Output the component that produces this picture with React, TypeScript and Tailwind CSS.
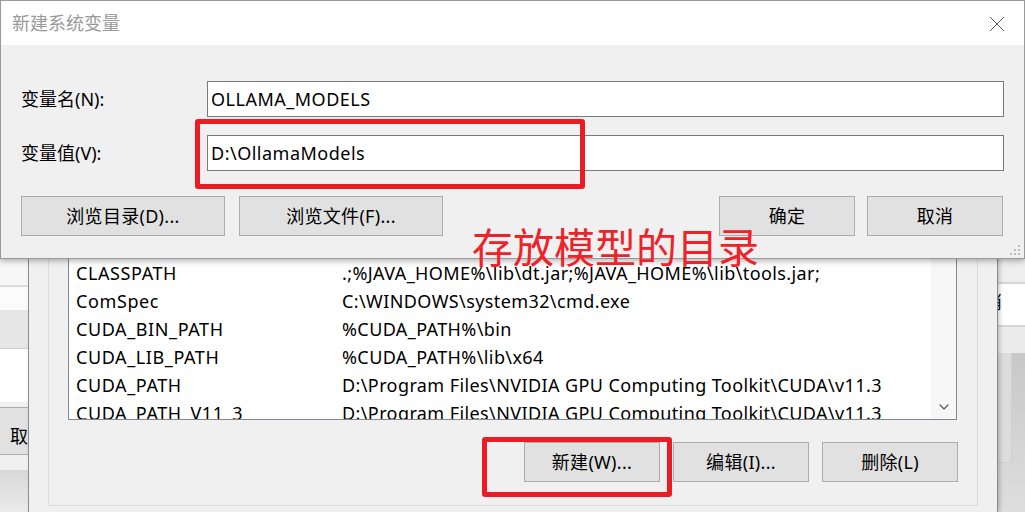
import { ChevronDown } from "lucide-react";

const ui = "font-['Noto_Sans','Noto_Sans_CJK_SC',sans-serif]";

const envRows: [string, string][] = [
  ["CLASSPATH", ".;%JAVA_HOME%\\lib\\dt.jar;%JAVA_HOME%\\lib\\tools.jar;"],
  ["ComSpec", "C:\\WINDOWS\\system32\\cmd.exe"],
  ["CUDA_BIN_PATH", "%CUDA_PATH%\\bin"],
  ["CUDA_LIB_PATH", "%CUDA_PATH%\\lib\\x64"],
  ["CUDA_PATH", "D:\\Program Files\\NVIDIA GPU Computing Toolkit\\CUDA\\v11.3"],
  ["CUDA_PATH_V11_3", "D:\\Program Files\\NVIDIA GPU Computing Toolkit\\CUDA\\v11.3"],
];

function WinButton({ label, w }: { label: string; w: string }) {
  return (
    <div
      className={`${w} h-[40px] flex items-center justify-center bg-[#e1e1e1] border border-[#adadad] text-[18px] text-black tracking-[0.3px] ${ui}`}
    >
      {label}
    </div>
  );
}

function LeftWindow() {
  return (
    <div className="absolute left-0 top-0 w-[28px] h-[512px] flex flex-col overflow-hidden">
      <div className="h-[285px] bg-[#f7f7f7]" />
      <div className="h-[2px] bg-[#dcdcdc]" />
      <div className="h-[23px] bg-[#fbfbfb]" />
      <div className="h-[39px] bg-[#e6e6e6] border-b border-[#cfcfcf]" />
      <div className="h-[53px] bg-white" />
      <div className="h-[5px] bg-[#f0f0f0]" />
      <div className="h-[48px] bg-[#e1e1e1] border-y border-[#adadad] flex items-center pl-[10px] pt-[8px] text-[18px] text-black font-['Noto_Sans_CJK_SC',serif]">
        取
      </div>
      <div className="h-[15px] bg-[#f0f0f0]" />
      <div className="flex-1 bg-gradient-to-b from-[#d8d8d8] to-[#ebebeb]" />
    </div>
  );
}

function RightWindow() {
  return (
    <div className="absolute left-[998px] top-0 w-[27px] h-[512px] flex flex-col overflow-hidden">
      <div className="h-[282px] bg-[#eeeeee]" />
      <div className="h-[2px] bg-[#d6d6d6]" />
      <div className="h-[41px] bg-white flex items-center overflow-hidden">
        <span className="-ml-[14px] -mt-[6px] text-[18px] text-black font-['Noto_Sans_CJK_SC',sans-serif]">消</span>
      </div>
      <div className="h-[2px] bg-[#d6d6d6]" />
      <div className="h-[26px] bg-[#ececec]" />
      <div className="flex-1 flex bg-gradient-to-b from-[#c8c8c8] to-[#dedede]">
        <div className="w-[14px] h-[110px] bg-[#dcdcdc] border-r border-b border-[#d0d0d0]" />
      </div>
    </div>
  );
}

function EnvDialog() {
  return (
    <div className="absolute left-[28px] top-0 w-[970px] h-[512px] bg-[#f0f0f0] border-x border-[#8c8c8c] shadow-[2px_0_4px_rgba(0,0,0,0.2)] flex flex-col">
      <div className="mt-[200px] mx-[19px] h-[306px] border border-[#dcdcdc] flex flex-col">
        <div className="mt-[2px] ml-[19px] mr-[20px] h-[217px] bg-white border border-[#828790] flex overflow-hidden">
          <div className={`flex-1 pt-[55px] pl-[7px] text-[18px] text-black tracking-[0.4px] ${ui}`}>
            {envRows.map(([name, value]) => (
              <div key={name} className="h-[28px] flex items-center whitespace-nowrap">
                <span className="w-[266px] shrink-0 tracking-[0.6px]">{name}</span>
                <span>{value}</span>
              </div>
            ))}
          </div>
          <div className="w-[25px] shrink-0 bg-[#f7f7f7] flex flex-col justify-end items-center pb-[4px]">
            <ChevronDown className="w-[16px] h-[16px] text-[#606060]" strokeWidth={2} />
          </div>
        </div>
        <div className="mt-[22px] pr-[19px] flex justify-end gap-[13px]">
          <WinButton label="新建(W)..." w="w-[136px]" />
          <WinButton label="编辑(I)..." w="w-[136px]" />
          <WinButton label="删除(L)" w="w-[136px]" />
        </div>
      </div>
    </div>
  );
}

function NewVarDialog() {
  return (
    <div className="absolute left-0 top-0 w-[1025px] h-[259px] border border-[#9a9a9a] bg-[#f0f0f0] shadow-[0_2px_6px_rgba(0,0,0,0.3)] flex flex-col">
      <div className="h-[44px] bg-white flex items-center justify-between pl-[11px] pr-[19px]">
        <span className={`text-[18px] text-[#999999] ${ui}`}>新建系统变量</span>
        <svg width="16" height="16" viewBox="0 0 16 16" className="mt-[1px]">
          <path d="M1 1 L15 15 M15 1 L1 15" stroke="#555555" strokeWidth="1" fill="none" />
        </svg>
      </div>
      <div className={`flex-1 pt-[36px] pl-[20px] pr-[20px] text-[18px] text-black ${ui}`}>
        <div className="flex items-center h-[36px]">
          <span className="w-[186px] shrink-0">变量名(N):</span>
          <div className="flex-1 h-full bg-white border border-[#7a7a7a] flex items-center pl-[3px] tracking-[0.5px]">
            OLLAMA_MODELS
          </div>
        </div>
        <div className="flex items-center h-[36px] mt-[18px]">
          <span className="w-[186px] shrink-0">变量值(V):</span>
          <div className="flex-1 h-full bg-white border border-[#7a7a7a] flex items-center pl-[3px] tracking-[0.5px]">
            D:\OllamaModels
          </div>
        </div>
        <div className="flex items-center mt-[25px] pr-[1px]">
          <WinButton label="浏览目录(D)..." w="w-[204px]" />
          <div className="ml-[14px]">
            <WinButton label="浏览文件(F)..." w="w-[204px]" />
          </div>
          <div className="flex-1" />
          <WinButton label="确定" w="w-[136px]" />
          <div className="ml-[12px]">
            <WinButton label="取消" w="w-[136px]" />
          </div>
        </div>
      </div>
      <svg width="12" height="12" viewBox="0 0 12 12" className="absolute right-[3px] bottom-[2px]">
        <rect x="9" y="1" width="2" height="2" fill="#bcbcbc" />
        <rect x="5" y="5" width="2" height="2" fill="#bcbcbc" />
        <rect x="9" y="5" width="2" height="2" fill="#bcbcbc" />
        <rect x="1" y="9" width="2" height="2" fill="#bcbcbc" />
        <rect x="5" y="9" width="2" height="2" fill="#bcbcbc" />
        <rect x="9" y="9" width="2" height="2" fill="#bcbcbc" />
      </svg>
    </div>
  );
}

export default function App() {
  return (
    <div className="relative w-[1025px] h-[512px] overflow-hidden bg-[#f0f0f0]">
      <LeftWindow />
      <RightWindow />
      <EnvDialog />
      <NewVarDialog />

      {/* annotations */}
      <div className="absolute left-[195px] top-[119px] w-[390px] h-[70px] border-[5px] border-[#ec1c24] rounded-[3px]" />
      <div className="absolute left-[482px] top-[437px] w-[190px] h-[60px] border-[5px] border-[#ec1c24] rounded-[3px]" />
      <div className="absolute left-[472px] top-[222px] text-[41px] leading-[46px] text-[#ee2229] font-['Noto_Sans_CJK_SC',sans-serif]">
        存放模型的目录
      </div>
    </div>
  );
}
